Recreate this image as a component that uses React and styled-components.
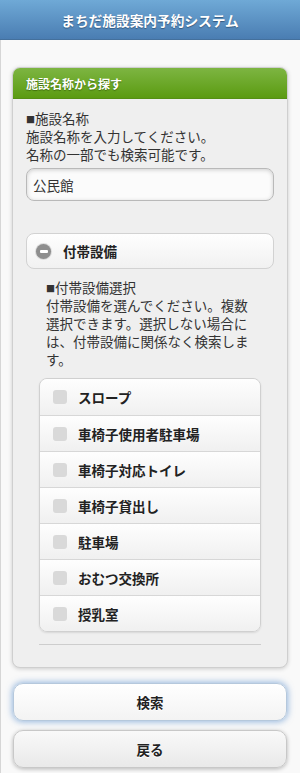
import React from "react";
import styled, { createGlobalStyle } from "styled-components";

const Global = createGlobalStyle`
  html, body { margin: 0; padding: 0; }
  body {
    background: #f9f9f9;
    font-family: "Noto Sans CJK JP", "Noto Sans", sans-serif;
    color: #333;
    width: 300px;
  }
  * { box-sizing: border-box; }
`;

const Page = styled.div`
  width: 300px;
  min-height: 773px;
  background: #f9f9f9;
  border-left: 1px solid #d6d6d6;
  display: flex;
  flex-direction: column;
`;

const Header = styled.header`
  height: 40px;
  background: linear-gradient(#6fa9d6, #4a7db2);
  border-bottom: 1px solid #44709c;
  display: flex;
  align-items: center;
  justify-content: center;
  color: #fff;
  font-weight: bold;
  font-size: 13.7px;
  text-shadow: 0 1px 1px #34597f;
  margin-left: -1px;
`;

const Content = styled.main`
  padding: 27px 12px 0 11px;
  display: flex;
  flex-direction: column;
`;

const Card = styled.section`
  border: 1px solid #cfcfcf;
  border-radius: 8px;
  background: #efefef;
  box-shadow: 0 1px 4px rgba(0, 0, 0, 0.18);
  overflow: hidden;
`;

const CardHead = styled.div`
  height: 31px;
  background: linear-gradient(#7db542, #5b9b11);
  border-bottom: 1px solid #558f14;
  color: #fff;
  font-size: 12px;
  font-weight: bold;
  padding-left: 13px;
  display: flex;
  align-items: center;
  text-shadow: 0 1px 1px #3f6d0c;
`;

const CardBody = styled.div`
  padding: 10px 13px 22px 13px;
  display: flex;
  flex-direction: column;
`;

const Text = styled.div`
  font-size: 13.5px;
  line-height: 18px;
  color: #333;
  padding: ${(p) => p.$pad || "0"};
`;

const Square = styled.span`
  display: inline-block;
  font-size: 9px;
  line-height: 1;
  vertical-align: 1px;
`;

const Input = styled.div`
  margin-top: 5px;
  height: 33px;
  border: 1px solid #b9b9b9;
  border-radius: 8px;
  background: #fbfbfb;
  box-shadow: inset 0 1px 4px rgba(0, 0, 0, 0.18);
  display: flex;
  align-items: center;
  padding-left: 6px;
  font-size: 13.5px;
  color: #333;
`;

const Collapsible = styled.div`
  margin-top: 32px;
  display: flex;
  flex-direction: column;
`;

const CollHead = styled.div`
  height: 36px;
  border: 1px solid #d2d2d2;
  border-radius: 8px;
  background: linear-gradient(#fefefe, #f1f1f1);
  display: flex;
  align-items: center;
  padding-left: 9px;
  gap: 12px;
  font-size: 13.5px;
  font-weight: bold;
  color: #222;
`;

const Minus = styled.span`
  width: 15px;
  height: 15px;
  border-radius: 50%;
  background: #8e8e8e;
  box-shadow: 0 0 0 1px rgba(180, 180, 180, 0.4);
  display: flex;
  align-items: center;
  justify-content: center;
  &::after {
    content: "";
    width: 8px;
    height: 3px;
    background: #fff;
    border-radius: 1px;
  }
`;

const CollBody = styled.div`
  padding: 9px 13px 0 13px;
  display: flex;
  flex-direction: column;
`;

const List = styled.div`
  margin-top: 10px;
  border: 1px solid #d0d0d0;
  border-radius: 8px;
  overflow: hidden;
  box-shadow: 0 1px 2px rgba(0, 0, 0, 0.1);
`;

const Row = styled.label`
  height: 36px;
  display: flex;
  align-items: center;
  padding-left: 13px;
  gap: 11px;
  background: linear-gradient(#fefefe, #f0f0f0);
  border-top: ${(p) => (p.$first ? "none" : "1px solid #d7d7d7")};
  font-size: 13.5px;
  font-weight: bold;
  color: #222;
`;

const Box = styled.span`
  width: 14px;
  height: 14px;
  border-radius: 3px;
  background: #d9d9d9;
  flex: none;
`;

const Rule = styled.hr`
  margin: 12px 13px 0 13px;
  border: none;
  border-top: 1px solid #cdcdcd;
  height: 0;
`;

const Buttons = styled.div`
  margin-top: 15px;
  display: flex;
  flex-direction: column;
  gap: 9px;
  padding: 0 1px 0 1px;
`;

const Button = styled.button`
  height: 38px;
  width: 100%;
  border: 1px solid ${(p) => (p.$focus ? "#b5c8dc" : "#c8c8c8")};
  border-radius: 10px;
  background: ${(p) =>
    p.$focus ? "linear-gradient(#ffffff, #f3f3f3)" : "linear-gradient(#f9f9f9, #e9e9e9)"};
  box-shadow: ${(p) =>
    p.$focus
      ? "0 0 6px 1px rgba(70, 130, 200, 0.55)"
      : "0 1px 4px rgba(0, 0, 0, 0.28)"};
  font-family: "Noto Sans CJK JP", "Noto Sans", sans-serif;
  font-size: 13.5px;
  font-weight: bold;
  color: #222;
  text-shadow: 0 1px 0 #fff;
`;

const items = [
  "スロープ",
  "車椅子使用者駐車場",
  "車椅子対応トイレ",
  "車椅子貸出し",
  "駐車場",
  "おむつ交換所",
  "授乳室",
];

export default function App() {
  return (
    <>
      <Global />
      <Page>
        <Header>まちだ施設案内予約システム</Header>
        <Content>
          <Card>
            <CardHead>施設名称から探す</CardHead>
            <CardBody>
              <Text>
                <Square>■</Square>施設名称
                <br />
                施設名称を入力してください。
                <br />
                名称の一部でも検索可能です。
              </Text>
              <Input>公民館</Input>
              <Collapsible>
                <CollHead>
                  <Minus />
                  付帯設備
                </CollHead>
                <CollBody>
                  <Text $pad="0 7px 0 7px">
                    <Square>■</Square>付帯設備選択
                    <br />
                    付帯設備を選んでください。複数選択できます。選択しない場合には、付帯設備に関係なく検索します。
                  </Text>
                  <List>
                    {items.map((t, i) => (
                      <Row key={t} $first={i === 0}>
                        <Box />
                        {t}
                      </Row>
                    ))}
                  </List>
                </CollBody>
              </Collapsible>
              <Rule />
            </CardBody>
          </Card>
          <Buttons>
            <Button $focus>検索</Button>
            <Button>戻る</Button>
          </Buttons>
        </Content>
      </Page>
    </>
  );
}
